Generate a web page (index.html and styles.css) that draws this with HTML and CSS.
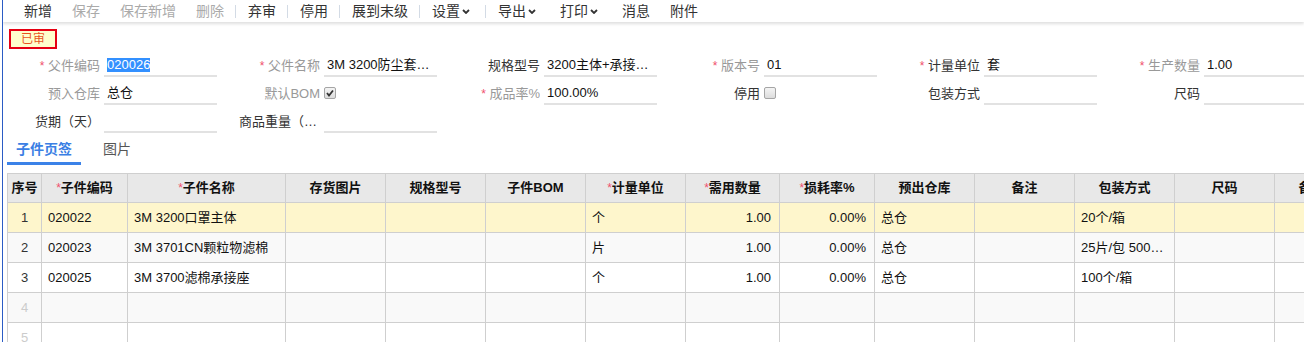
FILE: index.html
```html
<!DOCTYPE html>
<html lang="zh-CN">
<head>
    <meta charset="UTF-8">
    <title>BOM 单据</title>
    <link rel="stylesheet" href="styles.css">
</head>
<body>
<div class="page">

    <!-- Toolbar -->
    <div class="toolbar">
        <span class="tool">新增</span>
        <span class="tool off">保存</span>
        <span class="tool off">保存新增</span>
        <span class="tool off">删除</span>
        <span class="sep"></span>
        <span class="tool">弃审</span>
        <span class="sep"></span>
        <span class="tool">停用</span>
        <span class="sep"></span>
        <span class="tool">展到末级</span>
        <span class="sep"></span>
        <span class="tool menu">设置<svg class="caret" viewBox="0 0 8 5"><polyline points="1,1 4,4 7,1"/></svg></span>
        <span class="sep"></span>
        <span class="tool menu">导出<svg class="caret" viewBox="0 0 8 5"><polyline points="1,1 4,4 7,1"/></svg></span>
        <span class="tool menu">打印<svg class="caret" viewBox="0 0 8 5"><polyline points="1,1 4,4 7,1"/></svg></span>
        <span class="tool">消息</span>
        <span class="tool">附件</span>
    </div>

    <div class="status"><span class="badge">已审</span></div>

    <!-- Header fields -->
    <div class="form">
        <div class="field"><label class="lbl muted"><i class="req">*</i> 父件编码</label><div class="val"><span class="sel">020026</span></div></div>
        <div class="field"><label class="lbl muted"><i class="req">*</i> 父件名称</label><div class="val">3M 3200防尘套装组合</div></div>
        <div class="field"><label class="lbl">规格型号</label><div class="val">3200主体+承接座+滤棉</div></div>
        <div class="field"><label class="lbl muted"><i class="req">*</i> 版本号</label><div class="val">01</div></div>
        <div class="field"><label class="lbl"><i class="req">*</i> 计量单位</label><div class="val">套</div></div>
        <div class="field"><label class="lbl muted"><i class="req">*</i> 生产数量</label><div class="val">1.00</div></div>

        <div class="field"><label class="lbl muted">预入仓库</label><div class="val">总仓</div></div>
        <div class="field"><label class="lbl muted">默认BOM</label><div class="val plain"><span class="chk"><svg viewBox="0 0 10 10"><polyline points="2,5 4,7.5 8,2.5"/></svg></span></div></div>
        <div class="field"><label class="lbl muted"><i class="req">*</i> 成品率%</label><div class="val">100.00%</div></div>
        <div class="field"><label class="lbl">停用</label><div class="val plain"><span class="chk"></span></div></div>
        <div class="field"><label class="lbl">包装方式</label><div class="val"></div></div>
        <div class="field"><label class="lbl">尺码</label><div class="val"></div></div>

        <div class="field"><label class="lbl">货期（天）</label><div class="val"></div></div>
        <div class="field"><label class="lbl">商品重量（kg）</label><div class="val"></div></div>
    </div>

    <!-- Tabs -->
    <div class="tabs">
        <span class="tab on">子件页签</span>
        <span class="tab">图片</span>
    </div>

    <!-- Child items -->
    <div class="grid-wrap">
        <table class="grid">
            <colgroup>
                <col style="width:34px"><col style="width:86px"><col style="width:158px">
                <col style="width:100px"><col style="width:100px"><col style="width:100px">
                <col style="width:100px"><col style="width:94px"><col style="width:95px">
                <col style="width:100px"><col style="width:100px"><col style="width:100px">
                <col style="width:100px"><col style="width:100px">
            </colgroup>
            <thead>
                <tr>
                    <th>序号</th>
                    <th><i class="req">*</i>子件编码</th>
                    <th><i class="req">*</i>子件名称</th>
                    <th>存货图片</th>
                    <th>规格型号</th>
                    <th>子件BOM</th>
                    <th><i class="req">*</i>计量单位</th>
                    <th><i class="req">*</i>需用数量</th>
                    <th><i class="req">*</i>损耗率%</th>
                    <th>预出仓库</th>
                    <th>备注</th>
                    <th>包装方式</th>
                    <th>尺码</th>
                    <th>备用字段</th>
                </tr>
            </thead>
            <tbody>
                <tr class="current">
                    <td class="no">1</td><td>020022</td><td>3M 3200口罩主体</td><td></td><td></td><td></td>
                    <td>个</td><td class="num">1.00</td><td class="num">0.00%</td><td>总仓</td><td></td><td>20个/箱</td><td></td><td></td>
                </tr>
                <tr>
                    <td class="no">2</td><td>020023</td><td>3M 3701CN颗粒物滤棉</td><td></td><td></td><td></td>
                    <td>片</td><td class="num">1.00</td><td class="num">0.00%</td><td>总仓</td><td></td><td>25片/包 500片/箱</td><td></td><td></td>
                </tr>
                <tr>
                    <td class="no">3</td><td>020025</td><td>3M 3700滤棉承接座</td><td></td><td></td><td></td>
                    <td>个</td><td class="num">1.00</td><td class="num">0.00%</td><td>总仓</td><td></td><td>100个/箱</td><td></td><td></td>
                </tr>
                <tr class="blank">
                    <td class="no">4</td><td></td><td></td><td></td><td></td><td></td><td></td><td></td><td></td><td></td><td></td><td></td><td></td><td></td>
                </tr>
                <tr class="blank">
                    <td class="no">5</td><td></td><td></td><td></td><td></td><td></td><td></td><td></td><td></td><td></td><td></td><td></td><td></td><td></td>
                </tr>
            </tbody>
        </table>
    </div>

</div>
</body>
</html>
```

FILE: styles.css
```css
body {
    margin: 0;
    font-family: "Liberation Sans", "Noto Sans CJK SC", sans-serif;
    font-size: 13px;
    color: #333;
    background: #fff;
}

.page {
    margin-left: 2px;
    border-left: 1px solid #2b5cc5;
    height: 342px;
    overflow: hidden;
}

/* toolbar */
.toolbar {
    display: flex;
    align-items: center;
    height: 22px;
    padding-left: 11px;
    font-size: 14px;
    box-shadow: 0 2px 3px rgba(0, 0, 0, 0.13);
    position: relative;
}

.tool {
    padding: 0 10px;
    line-height: 16px;
    color: #333;
    white-space: nowrap;
    display: flex;
    align-items: center;
}

.tool.off {
    color: #aaa;
}

.tool.menu {
    padding-right: 14px;
}

.caret {
    width: 8px;
    height: 5px;
    margin-left: 2px;
    fill: none;
    stroke: #333;
    stroke-width: 1.8;
}

.sep {
    width: 1px;
    height: 13px;
    margin: 0 2px 0 1px;
    background: #d3dbe5;
}

/* status badge */
.status {
    padding: 7px 0 0 6px;
}

.badge {
    display: inline-block;
    box-sizing: border-box;
    width: 48px;
    height: 20px;
    line-height: 16px;
    text-align: center;
    font-size: 12px;
    color: #e8541e;
    background: #ffffcc;
    border: 2px solid #e60012;
}

/* header fields */
.form {
    display: grid;
    grid-template-columns: repeat(6, 220px);
    row-gap: 6px;
    margin-top: 6px;
}

.field {
    display: flex;
}

.lbl {
    box-sizing: border-box;
    width: 97px;
    padding-left: 16px;
    line-height: 22px;
    text-align: right;
    white-space: nowrap;
    overflow: hidden;
    text-overflow: ellipsis;
    color: #333;
}

.lbl.muted {
    color: #999;
}

.req {
    font-style: normal;
    color: #f0506e;
    font-size: 12px;
}

.val {
    box-sizing: border-box;
    width: 113px;
    height: 22px;
    margin-left: 4px;
    padding: 0 2px 0 3px;
    line-height: 20px;
    border-bottom: 2px solid #e2e2e2;
    color: #111;
    white-space: nowrap;
    overflow: hidden;
    text-overflow: ellipsis;
}

.val.plain {
    border-bottom-color: transparent;
    padding: 0;
    display: flex;
    align-items: center;
}

.sel {
    background: #3390ff;
    color: #fff;
    line-height: 14px;
    display: inline-block;
}

.chk {
    box-sizing: border-box;
    width: 12px;
    height: 12px;
    border: 1px solid #a5a5a5;
    border-radius: 2px;
    background: linear-gradient(#f4f4f4, #dcdcdc);
    display: flex;
}

.chk svg {
    width: 10px;
    height: 10px;
    fill: none;
    stroke: #333;
    stroke-width: 1.8;
}

/* tabs */
.tabs {
    display: flex;
    margin-top: 4px;
    padding-left: 4px;
}

.tab {
    padding: 0 9px;
    line-height: 25px;
    font-size: 14px;
    color: #555;
    border-bottom: 3px solid transparent;
}

.tab + .tab {
    margin-left: 13px;
}

.tab.on {
    color: #3b7fe4;
    font-weight: bold;
    border-bottom-color: #3b82e8;
}

/* table */
.grid-wrap {
    margin-top: 8px;
    padding-left: 4px;
}

.grid {
    border-collapse: collapse;
    table-layout: fixed;
    width: 1367px;
}

.grid th,
.grid td {
    border: 1px solid #cfcfcf;
    white-space: nowrap;
    overflow: hidden;
    text-overflow: ellipsis;
    line-height: 18px;
}

.grid th {
    height: 28px;
    padding: 0;
    background: #e8e8e8;
    color: #111;
    font-weight: bold;
    text-align: center;
}

.grid th .req {
    font-weight: normal;
}

.grid td {
    height: 29px;
    padding: 0 6px;
    color: #111;
}

.grid td.no {
    padding: 0;
    text-align: center;
    color: #333;
}

.grid td.num {
    text-align: right;
    padding-right: 8px;
}

.grid tbody tr:nth-child(even) td {
    background: #f9f9f9;
}

.grid tr.current td {
    background: #fef6cc;
}

.grid tr.blank td.no {
    color: #ccc;
}
```
